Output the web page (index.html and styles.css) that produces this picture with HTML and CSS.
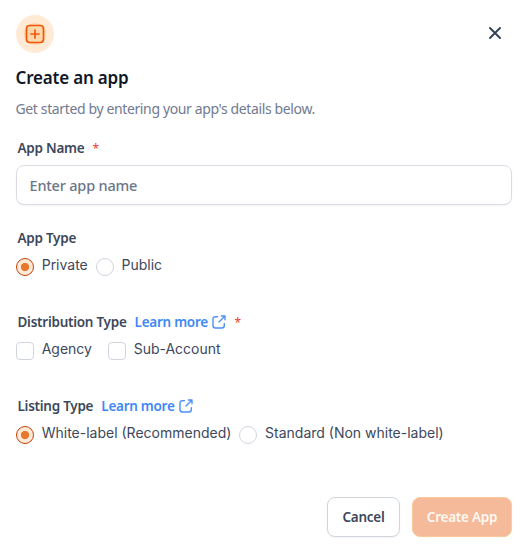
FILE: index.html
```html
<!DOCTYPE html>
<html lang="en">
<head>
  <meta charset="UTF-8">
  <title>Create an app</title>
  <link rel="stylesheet" href="styles.css">
</head>
<body>

  <form class="modal">
    <div class="modal-header">
      <span class="modal-icon">
        <svg width="20" height="20" viewBox="0 0 20 20" fill="none" stroke="#f4570b" stroke-width="1.7" stroke-linecap="round" stroke-linejoin="round">
          <rect x="1.5" y="1.5" width="17" height="17" rx="3.2"/>
          <path d="M10 6v8M6 10h8"/>
        </svg>
      </span>
      <button type="button" class="close" aria-label="Close">
        <svg width="12" height="12" viewBox="0 0 12 12" fill="none" stroke="#344054" stroke-width="1.9" stroke-linecap="round">
          <path d="M1 1l10 10M11 1L1 11"/>
        </svg>
      </button>
    </div>

    <h1>Create an app</h1>
    <p class="subtitle">Get started by entering your app's details below.</p>

    <div class="field field-name">
      <div class="label"><span>App Name</span><span class="required">*</span></div>
      <input type="text" class="text-input" placeholder="Enter app name">
    </div>

    <div class="field field-type">
      <div class="label"><span>App Type</span></div>
      <div class="options">
        <label class="option"><input type="radio" name="type" checked><span>Private</span></label>
        <label class="option"><input type="radio" name="type"><span>Public</span></label>
      </div>
    </div>

    <div class="field field-distribution">
      <div class="label">
        <span>Distribution Type</span>
        <a class="learn-more"><span>Learn more</span>
          <svg width="14" height="14" viewBox="0 0 14 14" fill="none" stroke="#4b8ff7" stroke-width="1.4" stroke-linecap="round" stroke-linejoin="round">
            <path d="M9.3 1H13v3.7M13 1L7 7M5.4 1.7H3.5Q1 1.7 1 4.2v6.3Q1 13 3.5 13h6.3q2.5 0 2.5-2.5V8.6"/>
          </svg>
        </a>
        <span class="required">*</span>
      </div>
      <div class="options checks">
        <label class="option"><input type="checkbox"><span>Agency</span></label>
        <label class="option"><input type="checkbox"><span>Sub-Account</span></label>
      </div>
    </div>

    <div class="field field-listing">
      <div class="label">
        <span>Listing Type</span>
        <a class="learn-more"><span>Learn more</span>
          <svg width="14" height="14" viewBox="0 0 14 14" fill="none" stroke="#4b8ff7" stroke-width="1.4" stroke-linecap="round" stroke-linejoin="round">
            <path d="M9.3 1H13v3.7M13 1L7 7M5.4 1.7H3.5Q1 1.7 1 4.2v6.3Q1 13 3.5 13h6.3q2.5 0 2.5-2.5V8.6"/>
          </svg>
        </a>
      </div>
      <div class="options">
        <label class="option"><input type="radio" name="listing" checked><span>White-label (Recommended)</span></label>
        <label class="option"><input type="radio" name="listing"><span>Standard (Non white-label)</span></label>
      </div>
    </div>

    <div class="modal-footer">
      <button type="button" class="btn btn-cancel">Cancel</button>
      <button type="submit" class="btn btn-create" disabled>Create App</button>
    </div>
  </form>

</body>
</html>
```
FILE: styles.css
```css
* {
  box-sizing: border-box;
}

body {
  margin: 0;
  background: #fff;
  color: #3d485b;
  font-family: "Segoe UI", "Noto Sans", "Open Sans", sans-serif;
}

.modal {
  width: 529px;
  height: 546px;
  padding: 15px 17px 9px 16px;
  display: flex;
  flex-direction: column;
}

.modal-header {
  height: 38px;
  display: flex;
  align-items: center;
  justify-content: space-between;
}

.modal-icon {
  width: 38px;
  height: 38px;
  border-radius: 50%;
  display: flex;
  align-items: center;
  justify-content: center;
  background: radial-gradient(circle, #fed7aa 10.5px, #ffead5 11.5px);
}

.close {
  padding: 0;
  margin: 0 11px 2px 0;
  border: none;
  background: none;
  display: flex;
}

h1 {
  margin: 12px 0 0 -0.5px;
  font-size: 17px;
  font-weight: 600;
  line-height: 26px;
  letter-spacing: -0.2px;
  color: #101828;
}

.subtitle {
  margin: 8px 0 0 -0.5px;
  font-size: 14px;
  line-height: 20px;
  letter-spacing: -0.37px;
  color: #717a8f;
}

.field {
  display: flex;
  flex-direction: column;
}

.label {
  display: flex;
  align-items: center;
  gap: 8px;
  height: 20px;
  padding-left: 1.5px;
  font-size: 13.5px;
  font-weight: 600;
  letter-spacing: -0.26px;
}

.required {
  color: #ef3b2d;
  font-size: 12px;
  font-weight: 400;
}

.field-name {
  margin-top: 19px;
}

.text-input {
  width: 496px;
  height: 40px;
  margin-top: 7px;
  padding: 0 12.5px;
  border: 1px solid #d9dce3;
  border-radius: 8px;
  box-shadow: 0 1px 2px rgba(16, 24, 40, 0.05);
  font: inherit;
  font-size: 14.5px;
  font-weight: 500;
  letter-spacing: -0.2px;
}

.text-input::placeholder {
  color: #6b758a;
}

.field-type {
  margin-top: 23px;
}

.field-distribution {
  margin-top: 36px;
}

.field-listing {
  margin-top: 36px;
}

.options {
  display: flex;
  gap: 8px;
  height: 28px;
  padding-top: 8px;
}

.checks {
  gap: 16px;
}

.option {
  display: flex;
  gap: 7.7px;
  font-family: Inter, sans-serif;
  font-size: 14px;
  line-height: 20px;
}

.option span {
  margin-top: -1px;
}

.option input {
  appearance: none;
  width: 18px;
  height: 18px;
  margin: 2px 0 0;
  border: 1px solid #d0d5dd;
  border-radius: 4px;
  background: #fff;
}

.option input[type="radio"] {
  border-radius: 50%;
}

.option input[type="radio"]:checked {
  border-color: #c4410c;
  background: radial-gradient(circle, #e87830 3.7px, #ffead5 4.5px);
}

.learn-more {
  display: flex;
  align-items: center;
  gap: 4.5px;
  color: #4088f6;
}

.modal-footer {
  margin-top: auto;
  display: flex;
  justify-content: flex-end;
  gap: 12px;
}

.btn {
  height: 40px;
  padding: 0;
  border-radius: 8px;
  font: inherit;
  font-size: 13.5px;
  font-weight: 600;
  letter-spacing: -0.25px;
}

.btn-cancel {
  width: 73px;
  border: 1px solid #d0d5dd;
  background: #fff;
  color: #3d485b;
  box-shadow: 0 1px 2px rgba(16, 24, 40, 0.05);
}

.btn-create {
  width: 100px;
  border: 1px solid #fbc99b;
  background: #f4ba9a;
  color: #fff8f3;
}
```
